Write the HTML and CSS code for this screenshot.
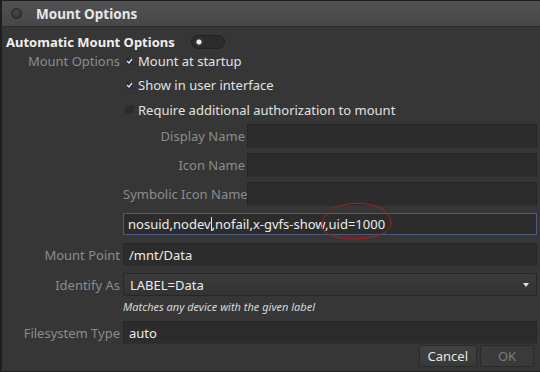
FILE: index.html
```html
<!DOCTYPE html>
<html lang="en">
<head>
  <meta charset="UTF-8">
  <title>Mount Options</title>
  <link rel="stylesheet" href="styles.css">
</head>
<body>
  <div class="window">
    <div class="titlebar">
      <span class="close-dot"></span>
      <span class="title">Mount Options</span>
    </div>

    <div class="content">
      <div class="auto-row">
        <span class="heading">Automatic Mount Options</span>
        <span class="switch"><span class="knob"></span></span>
      </div>

      <!-- Mount options block: checkboxes + nested name fields -->
      <div class="opts">
        <div class="label opts-label">Mount Options</div>
        <div class="opts-body">
          <div class="check">
            <span class="box checked"><svg width="7" height="6" viewBox="0 0 7 6"><path d="M1 3 L3 5 L6 1" fill="none" stroke="#e4e4e4" stroke-width="1.3"/></svg></span>
            Mount at startup
          </div>
          <div class="check">
            <span class="box checked"><svg width="7" height="6" viewBox="0 0 7 6"><path d="M1 3 L3 5 L6 1" fill="none" stroke="#e4e4e4" stroke-width="1.3"/></svg></span>
            Show in user interface
          </div>
          <div class="check">
            <span class="box"></span>
            Require additional authorization to mount
          </div>

          <div class="name-grid">
            <span class="label">Display Name</span>
            <span class="entry"></span>
            <span class="label">Icon Name</span>
            <span class="entry"></span>
            <span class="label">Symbolic Icon Name</span>
            <span class="entry"></span>
            <div class="entry wide focused">
              nosuid,nodev<span class="caret"></span>,nofail,x-gvfs-show,uid=1000
              <svg class="scribble" width="80" height="40" viewBox="0 0 80 40">
                <path d="M16 8 C24 2 42 1 55 4 C67 7 74 14 74 22 C74 30 65 35 50 37 C36 39 18 38 9 32 C3 27 4 19 10 13" fill="none" stroke="#a3212b" stroke-width="1"/>
                <path d="M9 32 C22 36 46 38 63 33" fill="none" stroke="#a3212b" stroke-width="0.8" opacity="0.6"/>
              </svg>
            </div>
          </div>
        </div>
      </div>

      <div class="form-grid">
        <span class="label">Mount Point</span>
        <span class="entry">/mnt/Data</span>

        <span class="label">Identify As</span>
        <span class="combo">LABEL=Data<span class="arrow"></span></span>

        <span></span>
        <span class="hint">Matches any device with the given label</span>

        <span class="label">Filesystem Type</span>
        <span class="entry">auto</span>
      </div>

      <div class="actions">
        <button type="button" class="btn">Cancel</button>
        <button type="button" class="btn disabled">OK</button>
      </div>
    </div>
  </div>
</body>
</html>
```

FILE: styles.css
```css
/* Base */
body {
  margin: 0;
  background: #2a2a2a;
  font-family: 'Noto Sans', 'Open Sans', sans-serif;
  font-size: 13px;
  color: #e2e2e2;
}

.window {
  width: 538px;
  height: 370px;
  background: #363636;
  border: 1px solid #1f1f1f;
  border-left-width: 2px;
  overflow: hidden;
}

/* Title bar */
.titlebar {
  height: 25px;
  display: flex;
  align-items: center;
  background: linear-gradient(#515154, #47474a);
  border-bottom: 1px solid #2e2e2e;
}

.close-dot {
  width: 9px;
  height: 9px;
  margin-left: 9px;
  border-radius: 50%;
  background: radial-gradient(circle at 50% 40%, #4a4a4a, #2e2e2e);
  border: 1px solid #262626;
}

.title {
  margin-left: 14px;
  font-weight: bold;
  font-size: 13.5px;
  color: #e6e6e6;
}

.content {
  padding: 6px 3px 0 4px;
}

/* Heading row */
.auto-row {
  display: flex;
  align-items: center;
  height: 18px;
}

.heading {
  font-weight: bold;
  font-size: 13px;
  color: #efefef;
}

.switch {
  position: relative;
  width: 32px;
  height: 12px;
  margin-left: 16px;
  border-radius: 7px;
  background: #2b2b2b;
  border: 1px solid #232323;
}

.knob {
  position: absolute;
  left: 2px;
  top: 1px;
  width: 10px;
  height: 10px;
  border-radius: 50%;
  background: radial-gradient(circle, #f0f0f0 0 2px, #3a3a3a 3px, #303030 5px);
}

.label {
  color: #8c8c8c;
  text-align: right;
  white-space: nowrap;
}

/* Mount options block */
.opts {
  display: grid;
  grid-template-columns: 114px 1fr;
  column-gap: 3px;
  margin-top: -2px;
}

.opts-label {
  line-height: 24px;
}

.check {
  display: flex;
  align-items: center;
  height: 24px;
  padding-left: 2px;
}

.check:nth-child(2),
.check:nth-child(3) {
  height: 24.5px;
}

.box {
  width: 7px;
  height: 7px;
  margin-right: 4px;
  display: flex;
  align-items: center;
  justify-content: center;
  background: #2c2c2c;
  border: 1px solid #2f2f2f;
}

.box.checked {
  background: #2a2c3c;
  border-color: #34364a;
}

.name-grid {
  display: grid;
  grid-template-columns: 122px 1fr;
  column-gap: 2px;
  row-gap: 5px;
  align-items: center;
  margin-top: 2px;
}

.entry {
  position: relative;
  height: 22px;
  padding-left: 5px;
  display: flex;
  align-items: center;
  background: #2c2c2c;
  border: 1px solid #262626;
  border-bottom-color: #303030;
  color: #ececec;
}

.entry.wide {
  grid-column: 1 / 3;
  height: 20px;
  margin-top: 2px;
  padding-left: 4px;
}

.entry.focused {
  border-color: #4a5b7e;
}

.caret {
  width: 1px;
  height: 14px;
  background: #e6e6e6;
}

.scribble {
  position: absolute;
  left: 193px;
  top: -13px;
}

/* Lower form */
.form-grid {
  display: grid;
  grid-template-columns: 114px 1fr;
  column-gap: 3px;
  row-gap: 7px;
  align-items: center;
  margin-top: 8px;
}

.form-grid .entry {
  height: 21px;
}

.combo {
  position: relative;
  height: 21px;
  padding-left: 6px;
  display: flex;
  align-items: center;
  background: linear-gradient(#3a3a3a, #333333);
  border: 1px solid #272727;
  border-radius: 2px;
  color: #ececec;
}

.arrow {
  position: absolute;
  right: 7px;
  top: 9px;
  border-left: 3px solid transparent;
  border-right: 3px solid transparent;
  border-top: 4px solid #e0e0e0;
}

.hint {
  height: 14px;
  line-height: 14px;
  font-size: 11px;
  font-style: italic;
  color: #d8d8d8;
  margin-top: -3px;
}

/* Buttons */
.actions {
  display: flex;
  justify-content: flex-end;
  gap: 3px;
  margin-top: 1px;
  padding-right: 3px;
}

.btn {
  height: 22px;
  padding: 0 8px;
  font-family: inherit;
  font-size: 13px;
  color: #e6e6e6;
  background: linear-gradient(#414141, #393939);
  border: 1px solid #2a2a2a;
  border-radius: 2px;
}

.btn.disabled {
  width: 54px;
  color: #7a7a7a;
  background: #3a3a3a;
}
```
